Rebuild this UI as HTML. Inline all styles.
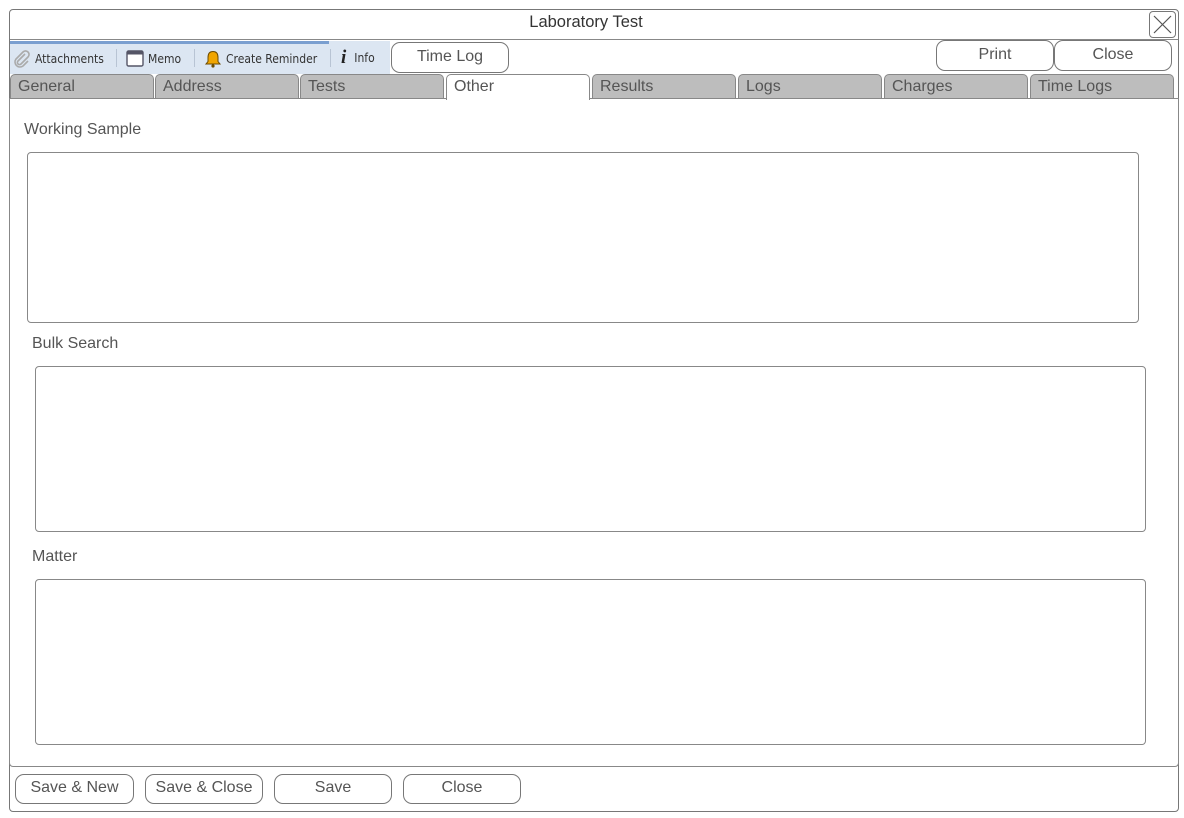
<!DOCTYPE html>
<html><head><meta charset="utf-8">
<style>
*{box-sizing:border-box;margin:0;padding:0}
body{width:1184px;height:818px;background:#fff;font-family:"Liberation Sans",sans-serif;color:#444;position:relative;overflow:hidden}
.abs{position:absolute}
.frame{left:9px;top:9px;width:1170px;height:803px;border:1px solid #777;border-radius:4px}
.title{left:486px;top:10px;width:200px;height:28px;text-align:center;font-size:16.5px;line-height:24px;color:#333}
.tline{left:10px;top:39px;width:1168px;height:1px;background:#888}
.x{left:1149px;top:11px;width:27px;height:27px;border:1px solid #777;border-radius:4px}
.btn{position:absolute;border:1px solid #777;border-radius:9px;background:#fff;text-align:center;font-size:16px;color:#555;line-height:28px}
.tb{left:10px;top:41px;width:380px;height:33px;background:#dce6f2}
.tbline{left:10px;top:41px;width:319px;height:3px;background:#7a9fd0}
.tbi{position:absolute;top:50px;font-size:12px;color:#333;font-family:"DejaVu Sans Condensed","DejaVu Sans",sans-serif;display:flex;align-items:center;gap:4px;line-height:16px}
.sep{position:absolute;top:49px;width:1px;height:18px;background:#b8c4d4}
.tab{position:absolute;top:74px;height:25px;width:144px;border:1px solid #888;border-bottom:none;border-radius:5px 5px 0 0;background:#bdbdbd;font-size:16px;line-height:23px;padding-left:7px;color:#555}
.tab.act{background:#fff;height:26px;z-index:2}
.panel{left:9px;top:98px;width:1170px;height:669px;border:1px solid #888;border-radius:0 0 4px 4px;background:#fff}
.lbl{position:absolute;font-size:16px;color:#555}
.box{position:absolute;border:1px solid #888;border-radius:4px;background:#fff}
</style></head><body>
<div class="abs frame"></div>
<div class="abs tline"></div>
<div class="abs title">Laboratory Test</div>
<div class="abs x"><svg width="25" height="25" viewBox="0 0 25 25"><path d="M4 4L21 21M21 4L4 21" stroke="#555" stroke-width="1.2"/></svg></div>

<div class="abs tb"></div>
<div class="abs tbline"></div>
<div class="tbi" style="left:13px"><svg width="18" height="18" viewBox="0 0 18 18"><path d="M12 4L5 11a2 2 0 0 0 3 3l7-7a3.5 3.5 0 0 0-5-5L3 9a5 5 0 0 0 7 7l5-5" fill="none" stroke="#aaa" stroke-width="1.6"/></svg>Attachments</div>
<div class="sep" style="left:116px"></div>
<div class="tbi" style="left:126px"><svg width="18" height="17" viewBox="0 0 18 17"><rect x="1" y="1" width="16" height="15" rx="1.5" fill="#fff" stroke="#556" stroke-width="1.4"/><rect x="1" y="1" width="16" height="3.5" fill="#556"/></svg>Memo</div>
<div class="sep" style="left:194px"></div>
<div class="tbi" style="left:204px"><svg width="18" height="18" viewBox="0 0 18 18"><path d="M9 1.5c-3.5 0-5 2.5-5 6v4L2 14h14l-2-2.5v-4c0-3.5-1.5-6-5-6z" fill="#f0a500" stroke="#6b4a00" stroke-width="1"/><circle cx="9" cy="16" r="1.6" fill="#6b4a00"/></svg>Create Reminder</div>
<div class="sep" style="left:330px"></div>
<div class="tbi" style="left:341px;gap:8px"><span style="font-family:'Liberation Serif',serif;font-style:italic;font-weight:bold;font-size:19px;color:#222">i</span>Info</div>
<div class="btn" style="left:391px;top:42px;width:118px;height:31px">Time Log</div>
<div class="btn" style="left:936px;top:40px;width:118px;height:31px">Print</div>
<div class="btn" style="left:1054px;top:40px;width:118px;height:31px">Close</div>

<div class="tab" style="left:10px">General</div>
<div class="tab" style="left:155px">Address</div>
<div class="tab" style="left:300px">Tests</div>
<div class="tab act" style="left:446px">Other</div>
<div class="tab" style="left:592px">Results</div>
<div class="tab" style="left:738px">Logs</div>
<div class="tab" style="left:884px">Charges</div>
<div class="tab" style="left:1030px">Time Logs</div>

<div class="abs panel"></div>
<div class="lbl" style="left:24px;top:121px">Working Sample</div>
<div class="box" style="left:27px;top:152px;width:1112px;height:171px"></div>
<div class="lbl" style="left:32px;top:335px">Bulk Search</div>
<div class="box" style="left:35px;top:366px;width:1111px;height:166px"></div>
<div class="lbl" style="left:32px;top:548px">Matter</div>
<div class="box" style="left:35px;top:579px;width:1111px;height:166px"></div>

<div class="btn" style="left:15px;top:774px;width:119px;height:30px;line-height:26px">Save &amp; New</div>
<div class="btn" style="left:145px;top:774px;width:118px;height:30px;line-height:26px">Save &amp; Close</div>
<div class="btn" style="left:274px;top:774px;width:118px;height:30px;line-height:26px">Save</div>
<div class="btn" style="left:403px;top:774px;width:118px;height:30px;line-height:26px">Close</div>
</body></html>
